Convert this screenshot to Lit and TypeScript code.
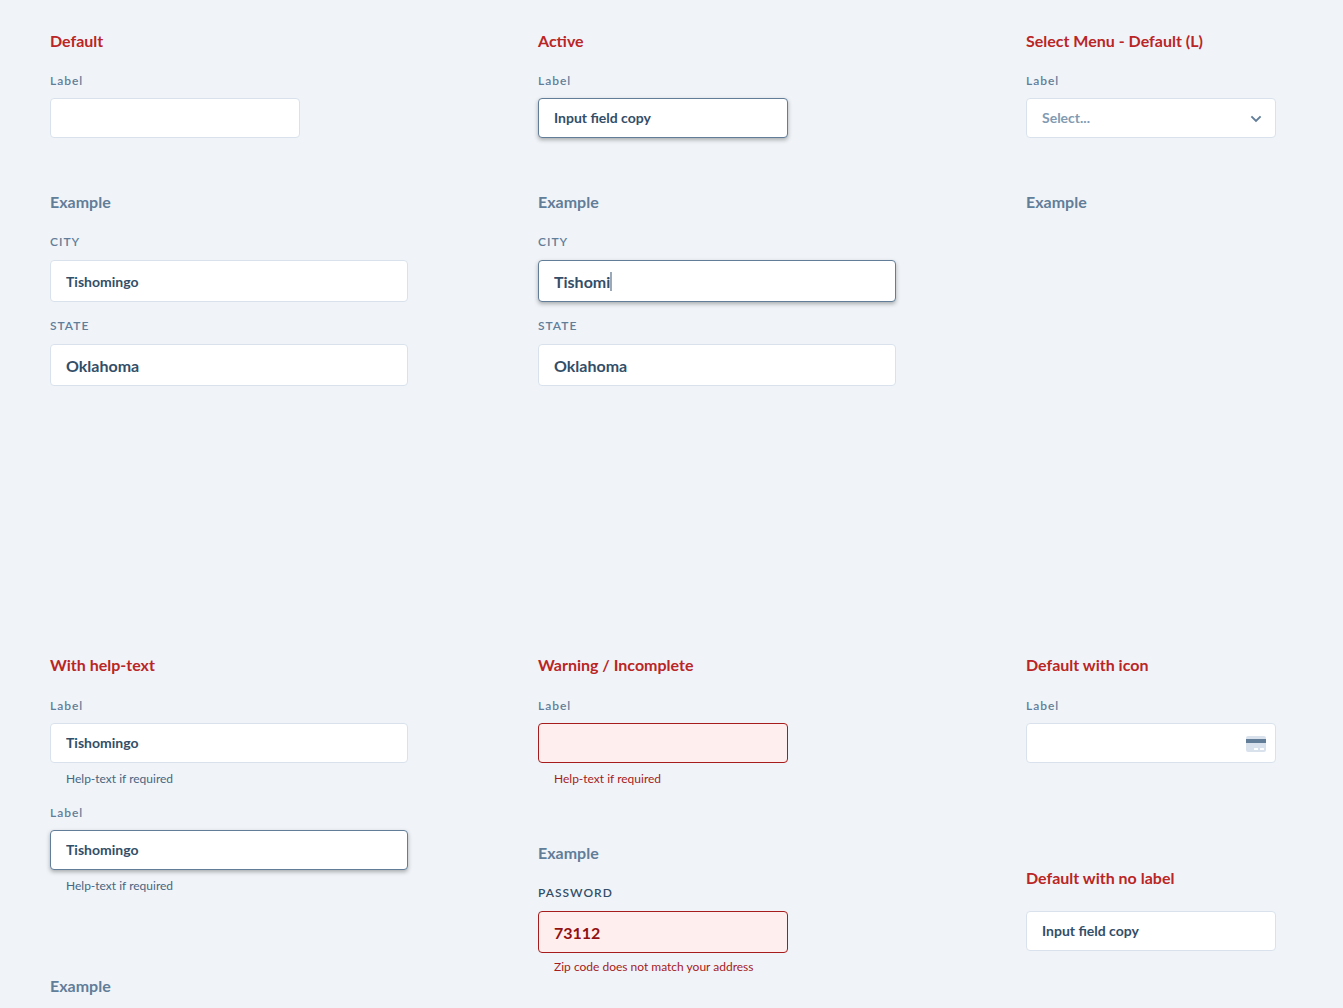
import { LitElement, html, css, svg, nothing } from "lit";
import { customElement, property } from "lit/decorators.js";

type Tone = "normal" | "active" | "error";
type Size = "medium" | "large";

const chevron = html`<svg class="icon chevron" width="12" height="8" viewBox="0 0 12 8" aria-hidden="true">
  ${svg`<path d="M1.4 1.4 6 6l4.6-4.6" fill="none" stroke="#627d98" stroke-width="1.9"/>`}
</svg>`;

const card = html`<svg class="icon card" width="20" height="16" viewBox="0 0 20 16" aria-hidden="true">
  ${svg`
    <rect width="20" height="16" rx="2" fill="#d9e2ec"/>
    <rect y="3" width="20" height="4" fill="#627d98"/>
    <rect x="8" y="12" width="4" height="2" rx="0.5" fill="#fff"/>
    <rect x="14" y="12" width="4" height="2" rx="0.5" fill="#fff"/>
  `}
</svg>`;

@customElement("form-field")
export class FormField extends LitElement {
  @property() label = "";
  @property() value = "";
  @property() help = "";
  @property() kind: "text" | "select" = "text";
  @property() icon = "";
  @property() tone: Tone = "normal";
  @property() size: Size = "medium";
  @property() text: Size = "medium";
  @property({ type: Boolean }) strong = false;
  @property({ type: Boolean }) typing = false;

  static styles = css`
    :host {
      display: block;
      width: 100%;
      max-width: 250px;
    }
    :host([wide]) {
      max-width: 358px;
    }
    .label {
      display: block;
      margin-bottom: 9px;
      font-size: 12px;
      line-height: 16px;
      font-weight: 600;
      letter-spacing: 1px;
      color: #627d98;
    }
    .label.strong {
      color: #334e68;
    }
    .label.large {
      margin-bottom: 10px;
    }
    .box {
      display: grid;
      align-items: center;
      height: 40px;
      box-sizing: border-box;
      background: #fff;
      border: 1px solid #d9e2ec;
      border-radius: 4px;
    }
    .box.large {
      height: 42px;
    }
    .box.active {
      border-color: #627d98;
      box-shadow: 0 2px 4px rgba(0, 0, 0, 0.3);
    }
    .box.error {
      background: #ffeeee;
      border-color: #a61b1b;
    }
    .box.typing {
      display: flex;
    }
    .control {
      grid-area: 1 / 1;
      width: 100%;
      height: 100%;
      min-width: 0;
      box-sizing: border-box;
      margin: 0;
      padding: 0 15px;
      border: 0;
      outline: 0;
      background: none;
      appearance: none;
      font: 700 14px "Lato", sans-serif;
      color: #334e68;
    }
    .control.large {
      font-size: 16px;
    }
    .box.medium .control {
      padding-bottom: 2px;
    }
    .error .control {
      color: #911111;
    }
    .typing .control {
      width: auto;
      max-width: 90%;
      padding-right: 0;
      field-sizing: content;
    }
    .caret {
      width: 2px;
      height: 19px;
      background: #9aa8b7;
    }
    select.control {
      color: #829ab1;
    }
    .icon {
      grid-area: 1 / 1;
      justify-self: end;
      pointer-events: none;
    }
    .chevron {
      margin: 2px 13px 0 0;
    }
    .card {
      margin: 2px 9px 0 0;
    }
    .help {
      margin: 8px 0 0;
      padding-left: 16px;
      font-size: 12px;
      line-height: 16px;
      color: #486581;
    }
    .help.large {
      margin-top: 6px;
    }
    .help.error {
      color: #a61b1b;
    }
  `;

  render() {
    return html`
      ${this.label
        ? html`<label class="label ${this.size} ${this.strong ? "strong" : ""}" for="control">${this.label}</label>`
        : nothing}
      <div class="box ${this.size} ${this.tone} ${this.typing ? "typing" : ""}">
        ${this.kind === "select"
          ? html`<select id="control" class="control"><option>${this.value}</option></select>${chevron}`
          : html`<input id="control" class="control ${this.text}" type="text" .value=${this.value} />`}
        ${this.typing ? html`<span class="caret"></span>` : nothing}
        ${this.icon === "card" ? card : nothing}
      </div>
      ${this.help ? html`<p class="help ${this.size} ${this.tone}">${this.help}</p>` : nothing}
    `;
  }
}

@customElement("app-root")
export class AppRoot extends LitElement {
  static styles = css`
    :host {
      display: block;
      min-height: 100vh;
      box-sizing: border-box;
      padding: 29px 48px 10px 50px;
      background: #f0f4f8;
      font-family: "Lato", sans-serif;
    }
    .sheet {
      display: grid;
      grid-template-columns: 358fr 358fr 269fr;
      column-gap: 130px;
      row-gap: 267px;
      align-items: start;
    }
    .column {
      display: flex;
      flex-direction: column;
      gap: 52px;
    }
    .column.near {
      gap: 54px;
    }
    .column.far {
      gap: 80px;
    }
    .column.farther {
      gap: 103px;
    }
    .group {
      display: flex;
      flex-direction: column;
      gap: 20px;
    }
    .fields {
      display: flex;
      flex-direction: column;
      gap: 16px;
    }
    .fields.help {
      gap: 18px;
    }
    .lower .group {
      gap: 21px;
    }
    .lower .group.sample {
      gap: 20px;
    }
    .title {
      margin: 0;
      font-size: 16px;
      line-height: 24px;
      font-weight: 700;
      color: #ba2525;
    }
    .title.example {
      color: #627d98;
    }
  `;

  render() {
    return html`
      <main class="sheet">
        <section class="column">
          <div class="group">
            <h2 class="title">Default</h2>
            <form-field label="Label"></form-field>
          </div>
          <div class="group">
            <h3 class="title example">Example</h3>
            <div class="fields">
              <form-field wide size="large" label="CITY" value="Tishomingo"></form-field>
              <form-field wide size="large" text="large" label="STATE" value="Oklahoma"></form-field>
            </div>
          </div>
        </section>

        <section class="column">
          <div class="group">
            <h2 class="title">Active</h2>
            <form-field tone="active" label="Label" value="Input field copy"></form-field>
          </div>
          <div class="group">
            <h3 class="title example">Example</h3>
            <div class="fields">
              <form-field wide typing tone="active" size="large" text="large" label="CITY" value="Tishomi"></form-field>
              <form-field wide size="large" text="large" label="STATE" value="Oklahoma"></form-field>
            </div>
          </div>
        </section>

        <section class="column">
          <div class="group">
            <h2 class="title">Select Menu - Default (L)</h2>
            <form-field kind="select" label="Label" value="Select..."></form-field>
          </div>
          <h3 class="title example">Example</h3>
        </section>

        <section class="column lower far">
          <div class="group">
            <h2 class="title">With help-text</h2>
            <div class="fields help">
              <form-field wide label="Label" value="Tishomingo" help="Help-text if required"></form-field>
              <form-field wide tone="active" label="Label" value="Tishomingo" help="Help-text if required"></form-field>
            </div>
          </div>
          <h3 class="title example">Example</h3>
        </section>

        <section class="column lower near">
          <div class="group">
            <h2 class="title">Warning / Incomplete</h2>
            <form-field tone="error" label="Label" help="Help-text if required"></form-field>
          </div>
          <div class="group sample">
            <h3 class="title example">Example</h3>
            <form-field
              strong
              tone="error"
              size="large"
              text="large"
              label="PASSWORD"
              value="73112"
              help="Zip code does not match your address"
            ></form-field>
          </div>
        </section>

        <section class="column lower farther">
          <div class="group">
            <h2 class="title">Default with icon</h2>
            <form-field label="Label" icon="card"></form-field>
          </div>
          <div class="group">
            <h2 class="title">Default with no label</h2>
            <form-field value="Input field copy"></form-field>
          </div>
        </section>
      </main>
    `;
  }
}
